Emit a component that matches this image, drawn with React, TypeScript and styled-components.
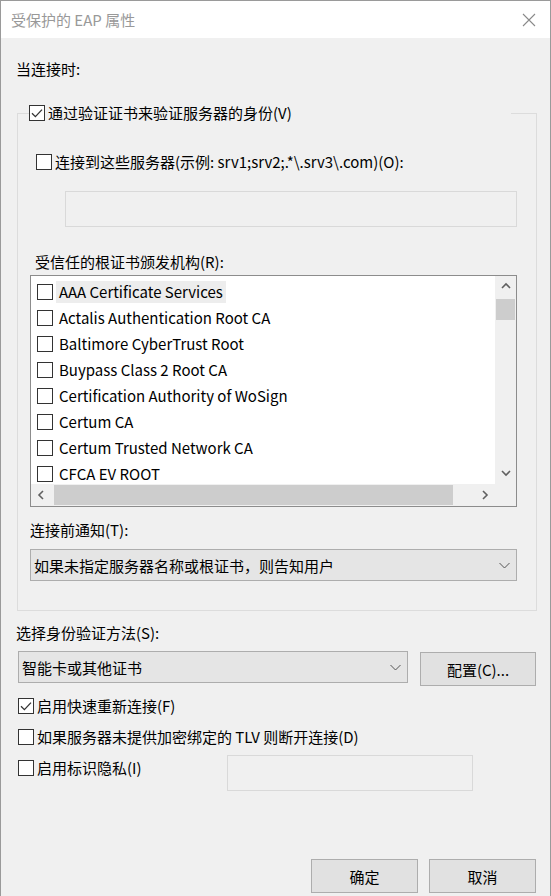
import styled, { createGlobalStyle } from "styled-components";

const GlobalStyle = createGlobalStyle`
  html, body {
    margin: 0;
    padding: 0;
    background: #f0f0f0;
  }
  body {
    font-family: "Noto Sans CJK SC", "Noto Sans", sans-serif;
    font-size: 15px;
    color: #000;
  }
  * {
    box-sizing: border-box;
  }
`;

const Window = styled.div`
  width: 551px;
  height: 896px;
  display: flex;
  flex-direction: column;
  border: 1px solid #9a9a9a;
  border-bottom: none;
  background: #f0f0f0;
  overflow: hidden;
`;

const TitleBar = styled.div`
  height: 37px;
  flex: none;
  background: #fff;
  display: flex;
  align-items: center;
  justify-content: space-between;
  padding: 0 14px 0 10px;
`;

const Title = styled.span`
  color: #999;
  line-height: 20px;
`;

const Body = styled.div`
  flex: 1;
  display: flex;
  flex-direction: column;
  padding: 0 13px 3px 15px;
`;

const Label = styled.div<{ $top?: number; $left?: number }>`
  line-height: 20px;
  height: 20px;
  white-space: nowrap;
  margin-top: ${(p) => p.$top ?? 0}px;
  margin-left: ${(p) => p.$left ?? 0}px;
`;

const Group = styled.fieldset`
  margin: 24px 0 0 1px;
  padding: 0;
  border: 1px solid #dcdcdc;
  min-width: 0;
`;

const Legend = styled.legend`
  margin-left: 11px;
  padding: 0;
  width: 482px;
  height: 20px;
`;

const GroupContent = styled.div`
  display: flex;
  flex-direction: column;
  padding: 29px 18px 29px 12px;
`;

const CheckRow = styled.label<{ $top?: number; $left?: number; $gap?: number }>`
  display: flex;
  align-items: center;
  gap: ${(p) => p.$gap ?? 3}px;
  height: 20px;
  line-height: 20px;
  white-space: nowrap;
  margin-top: ${(p) => p.$top ?? 0}px;
  margin-left: ${(p) => p.$left ?? 0}px;
`;

const Box = styled.span`
  width: 16px;
  height: 16px;
  flex: none;
  border: 1px solid #333;
  background: #fff;
  display: flex;
  align-items: center;
  justify-content: center;
`;

const TextField = styled.div<{ $width: number; $left?: number; $top?: number }>`
  width: ${(p) => p.$width}px;
  height: 36px;
  flex: none;
  border: 1px solid #d9d9d9;
  background: #f0f0f0;
  margin-left: ${(p) => p.$left ?? 0}px;
  margin-top: ${(p) => p.$top ?? 0}px;
`;

const ListBox = styled.div`
  margin-top: 3px;
  width: 487px;
  height: 232px;
  border: 1px solid #8c8c8c;
  background: #fff;
  display: grid;
  grid-template-columns: 464px 21px;
  grid-template-rows: 208px 22px;
`;

const Items = styled.div`
  overflow: hidden;
  display: flex;
  flex-direction: column;
  padding-top: 3px;
`;

const Item = styled.div`
  height: 26px;
  flex: none;
  display: flex;
  align-items: center;
  padding-left: 6px;
  gap: 3px;
  white-space: nowrap;
`;

const ItemText = styled.span<{ $focused?: boolean }>`
  padding: 0 3px;
  line-height: 22px;
  background: ${(p) => (p.$focused ? "#ededed" : "transparent")};
`;

const VScroll = styled.div`
  background: #f0f0f0;
  display: flex;
  flex-direction: column;
  align-items: stretch;
`;

const HScroll = styled.div`
  background: #f0f0f0;
  display: flex;
  align-items: stretch;
`;

const Corner = styled.div`
  background: #f0f0f0;
`;

const ArrowCell = styled.div`
  flex: none;
  width: 21px;
  height: 21px;
  display: flex;
  align-items: center;
  justify-content: center;
`;

const VThumb = styled.div`
  height: 21px;
  margin: 2px 1px 0 1px;
  background: #cdcdcd;
`;

const HThumb = styled.div`
  width: 399px;
  margin: 1px 0 1px 2px;
  background: #cdcdcd;
`;

const Spacer = styled.div`
  flex: 1;
`;

const Combo = styled.div<{ $width: number; $top?: number; $left?: number }>`
  width: ${(p) => p.$width}px;
  height: 32px;
  flex: none;
  margin-top: ${(p) => p.$top ?? 0}px;
  margin-left: ${(p) => p.$left ?? 0}px;
  border: 1px solid #adadad;
  background: #e5e5e5;
  display: flex;
  align-items: center;
  justify-content: space-between;
  padding: 0 6px 0 3px;
  white-space: nowrap;
`;

const MethodRow = styled.div`
  display: flex;
  align-items: flex-start;
  gap: 12px;
  margin-top: 8px;
  margin-left: 2px;
`;

const Button = styled.button<{ $width: number; $top?: number }>`
  width: ${(p) => p.$width}px;
  height: 34px;
  margin-top: ${(p) => p.$top ?? 0}px;
  border: 1px solid #adadad;
  background: #e1e1e1;
  font: inherit;
  color: #000;
  padding: 0;
`;

const PrivacyRow = styled.div`
  display: flex;
  align-items: flex-start;
  margin-top: 8px;
  margin-left: 2px;
`;

const Footer = styled.div`
  margin-top: auto;
  display: flex;
  justify-content: flex-end;
  gap: 11px;
  margin-right: 1px;
`;

const Check = ({ checked }: { checked?: boolean }) => (
  <Box>
    {checked && (
      <svg width="14" height="14" viewBox="0 0 14 14">
        <path d="M2 7.2 L5.4 10.6 L12 3.6" fill="none" stroke="#333" strokeWidth="1.3" />
      </svg>
    )}
  </Box>
);

const Chevron = ({ dir }: { dir: "up" | "down" | "left" | "right" }) => {
  const pts = {
    up: "1,6 5,2 9,6",
    down: "1,2 5,6 9,2",
    left: "6,1 2,5 6,9",
    right: "3,1 7,5 3,9",
  }[dir];
  return (
    <svg width="10" height="10" viewBox="0 0 10 10">
      <polyline points={pts} fill="none" stroke="#606060" strokeWidth="1.6" />
    </svg>
  );
};

const ComboArrow = () => (
  <svg width="11" height="7" viewBox="0 0 11 7">
    <polyline points="0.5,1 5.5,6 10.5,1" fill="none" stroke="#555" strokeWidth="1" />
  </svg>
);

const CloseIcon = () => (
  <svg width="14" height="14" viewBox="0 0 14 14">
    <path d="M1 1 L13 13 M13 1 L1 13" stroke="#8a8a8a" strokeWidth="1.1" />
  </svg>
);

const authorities = [
  "AAA Certificate Services",
  "Actalis Authentication Root CA",
  "Baltimore CyberTrust Root",
  "Buypass Class 2 Root CA",
  "Certification Authority of WoSign",
  "Certum CA",
  "Certum Trusted Network CA",
  "CFCA EV ROOT",
];

export default function App() {
  return (
    <>
      <GlobalStyle />
      <Window>
        <TitleBar>
          <Title>受保护的 EAP 属性</Title>
          <CloseIcon />
        </TitleBar>
        <Body>
          <Label $top={21}>当连接时:</Label>
          <Group>
            <Legend>
              <CheckRow $gap={3}>
                <Check checked />
                通过验证证书来验证服务器的身份(V)
              </CheckRow>
            </Legend>
            <GroupContent>
              <CheckRow $left={6}>
                <Check />
                连接到这些服务器(示例: srv1;srv2;.*\.srv3\.com)(O):
              </CheckRow>
              <TextField $width={452} $left={35} $top={19} />
              <Label $top={25} $left={5}>
                受信任的根证书颁发机构(R):
              </Label>
              <ListBox>
                <Items>
                  {authorities.map((name, i) => (
                    <Item key={name}>
                      <Check />
                      <ItemText $focused={i === 0}>{name}</ItemText>
                    </Item>
                  ))}
                </Items>
                <VScroll>
                  <ArrowCell>
                    <Chevron dir="up" />
                  </ArrowCell>
                  <VThumb />
                  <Spacer />
                  <ArrowCell>
                    <Chevron dir="down" />
                  </ArrowCell>
                </VScroll>
                <HScroll>
                  <ArrowCell>
                    <Chevron dir="left" />
                  </ArrowCell>
                  <HThumb />
                  <Spacer />
                  <ArrowCell>
                    <Chevron dir="right" />
                  </ArrowCell>
                </HScroll>
                <Corner />
              </ListBox>
              <Label $top={13}>连接前通知(T):</Label>
              <Combo $width={487} $top={9}>
                如果未指定服务器名称或根证书，则告知用户
                <ComboArrow />
              </Combo>
            </GroupContent>
          </Group>
          <Label $top={12}>选择身份验证方法(S):</Label>
          <MethodRow>
            <Combo $width={390}>
              智能卡或其他证书
              <ComboArrow />
            </Combo>
            <Button $width={116} $top={1}>
              配置(C)...
            </Button>
          </MethodRow>
          <CheckRow $top={10} $left={2}>
            <Check checked />
            启用快速重新连接(F)
          </CheckRow>
          <CheckRow $top={11} $left={2}>
            <Check />
            如果服务器未提供加密绑定的 TLV 则断开连接(D)
          </CheckRow>
          <PrivacyRow>
            <CheckRow $top={3}>
              <Check />
              启用标识隐私(I)
            </CheckRow>
            <TextField $width={246} $left={85} />
          </PrivacyRow>
          <Footer>
            <Button $width={107}>确定</Button>
            <Button $width={107}>取消</Button>
          </Footer>
        </Body>
      </Window>
    </>
  );
}
